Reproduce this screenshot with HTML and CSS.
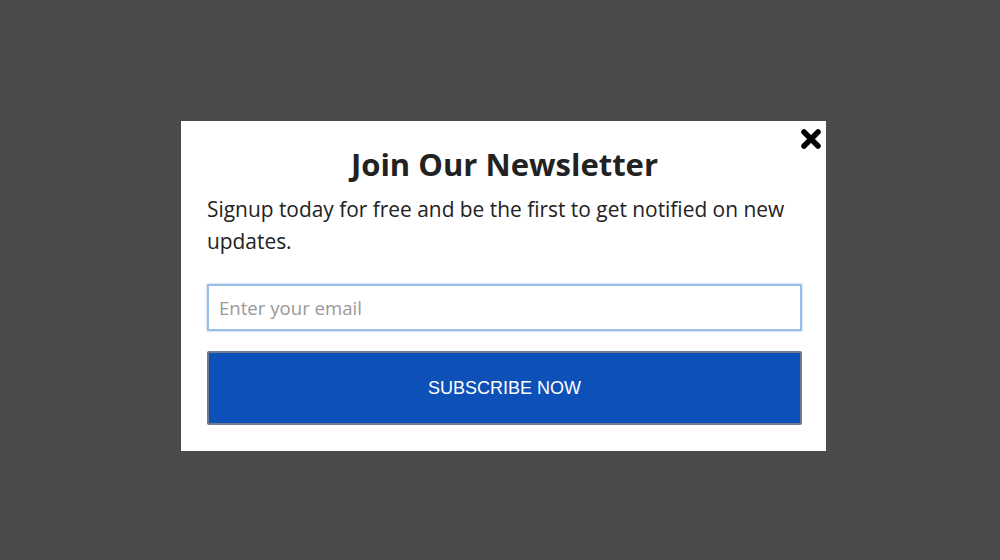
FILE: index.html
```html
<!DOCTYPE html>
<html lang="en">
<head>
    <meta charset="UTF-8">
    <meta name="viewport" content="width=device-width, initial-scale=1.0">
    <title>Join Our Newsletter</title>
    <link rel="stylesheet" href="styles.css">
</head>
<body>
    <div class="overlay">
        <div class="popup">
            <button class="closeBtn" aria-label="Close">
                <svg width="22" height="22" viewBox="0 0 22 22">
                    <path d="M4 4 L18 18 M18 4 L4 18" stroke="#000" stroke-width="5.5" stroke-linecap="round"/>
                </svg>
            </button>
            <h1>Join Our Newsletter</h1>
            <p>Signup today for free and be the first to get notified on new updates.</p>
            <form onsubmit="event.preventDefault()">
                <input type="email" class="emailInput" placeholder="Enter your email">
                <button type="submit" class="subscribeBtn">SUBSCRIBE NOW</button>
            </form>
        </div>
    </div>
</body>
</html>
```

FILE: styles.css
```css
body {
    margin: 0;
    background-color: #4b4b4b;
    font-family: "Open Sans", "Liberation Sans", sans-serif;
}
.overlay {
    height: 560px;
    display: flex;
    justify-content: center;
    align-items: flex-start;
    padding: 121px 0 0 7px;
    box-sizing: border-box;
}
.popup {
    position: relative;
    width: 645px;
    background-color: #fff;
    padding: 22px 24px 26px 26px;
    box-sizing: border-box;
}
.closeBtn {
    position: absolute;
    top: 7px;
    right: 4px;
    background: none;
    border: none;
    padding: 0;
    cursor: pointer;
}
.closeBtn svg {
    display: block;
}
h1 {
    margin: 0;
    text-align: center;
    font-size: 31px;
    line-height: 42px;
    font-weight: 700;
    color: #222;
}
p {
    margin: 8px 0 0;
    font-size: 20.9px;
    line-height: 32px;
    color: #222;
}
form {
    display: flex;
    flex-direction: column;
    gap: 20px;
    margin-top: 27px;
}
.emailInput {
    height: 47px;
    padding: 0 10px;
    border: 2px solid #98bde6;
    box-shadow: 0 0 2px #9bbfe8;
    font-family: "Open Sans", sans-serif;
    font-size: 18.6px;
    color: #333;
    box-sizing: border-box;
    outline: none;
}
.emailInput::placeholder {
    color: #999;
}
.subscribeBtn {
    height: 74px;
    background-color: #0d50b8;
    border: 2px solid #6f7b8c;
    border-radius: 2px;
    color: #fff;
    font-family: "Liberation Sans", Arial, sans-serif;
    font-size: 18px;
    cursor: pointer;
}
```
